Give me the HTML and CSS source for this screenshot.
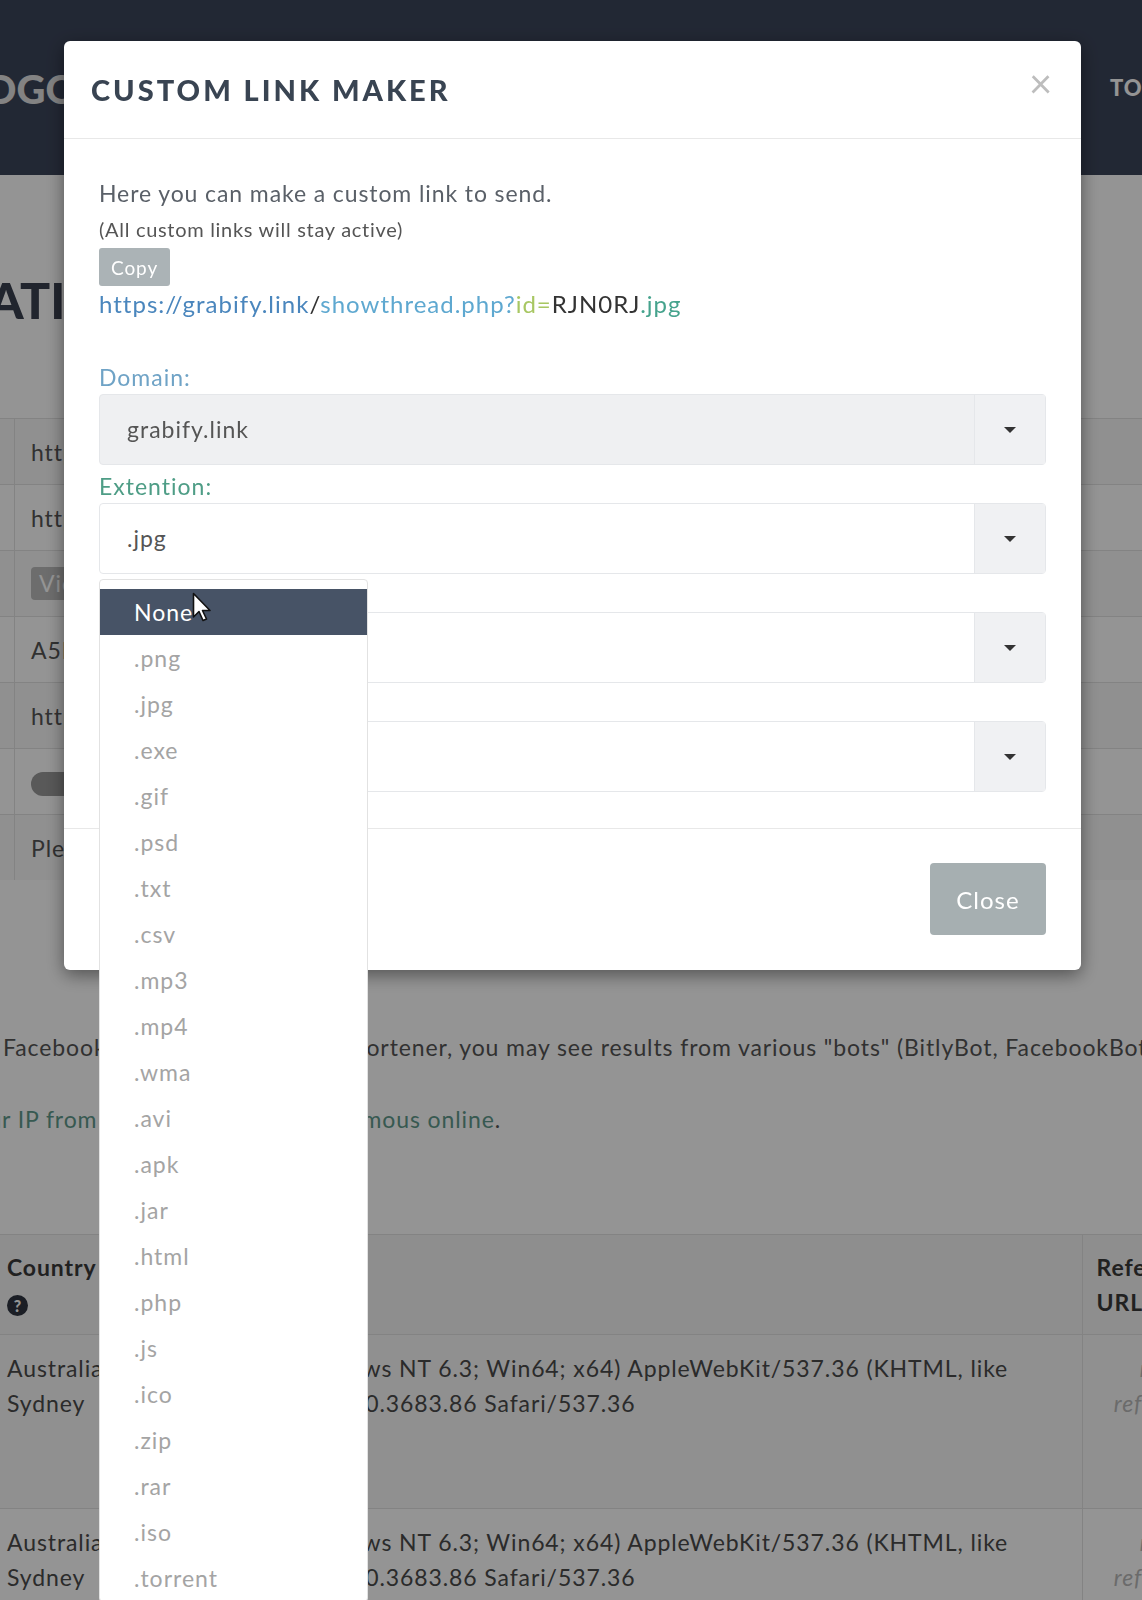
FILE: index.html
```html
<!DOCTYPE html>
<html lang="en">
<head>
    <meta charset="UTF-8">
    <meta name="viewport" content="width=device-width, initial-scale=1.0">
    <title>Custom Link Maker</title>
    <link rel="stylesheet" href="styles.css">
</head>
<body>
    <div class="page">
        <header class="topbar">
            <span class="logo">LOGO</span>
            <nav>
                <ul class="top-links">
                    <li><a href="#">HOME</a></li>
                    <li><a href="#">TOOLS</a></li>
                </ul>
            </nav>
        </header>

        <main class="content">
            <h1 class="page-title">INFORMATION</h1>

            <table class="info-table">
                <tr><td class="info-key"></td><td>https://grabify.link/RJN0RJ</td></tr>
                <tr><td class="info-key"></td><td>https://grabify.link/track/RJN0RJ</td></tr>
                <tr><td class="info-key"></td><td><span class="view-btn">View</span></td></tr>
                <tr><td class="info-key"></td><td>A5F2K9</td></tr>
                <tr><td class="info-key"></td><td>https://www.youtube.com/</td></tr>
                <tr><td class="info-key"></td><td><span class="toggle"></span></td></tr>
                <tr><td class="info-key"></td><td>Please note that smart logger is enabled.</td></tr>
            </table>

            <p class="note">Facebook, Twitter or via a URL shortener, you may see results from various "bots" (BitlyBot, FacebookBot, TwitterBot)</p>
            <p class="note note-link"><a href="#">your IP from users and remain anonymous online</a>.</p>

            <table class="log-table">
                <thead>
                    <tr>
                        <th class="col-country">Country<br><span class="help-icon">?</span></th>
                        <th class="col-agent">User Agent</th>
                        <th class="col-ref">Referrer URL</th>
                    </tr>
                </thead>
                <tbody>
                    <tr>
                        <td>Australia<br>Sydney</td>
                        <td class="agent">Mozilla/5.0 (Windows NT 6.3; Win64; x64) AppleWebKit/537.36 (KHTML, like<br>Gecko) Chrome/69.0.3683.86 Safari/537.36</td>
                        <td class="no-ref">no<br>referrer</td>
                    </tr>
                    <tr>
                        <td>Australia<br>Sydney</td>
                        <td class="agent">Mozilla/5.0 (Windows NT 6.3; Win64; x64) AppleWebKit/537.36 (KHTML, like<br>Gecko) Chrome/69.0.3683.86 Safari/537.36</td>
                        <td class="no-ref">no<br>referrer</td>
                    </tr>
                </tbody>
            </table>
        </main>
    </div>

    <div class="backdrop"></div>

    <div class="modal">
        <div class="modal-dialog">
            <div class="modal-header">
                <h2 class="modal-title">CUSTOM LINK MAKER</h2>
                <span class="close-x">&times;</span>
            </div>

            <div class="modal-body">
                <p class="lead">Here you can make a custom link to send.</p>
                <p class="small-note">(All custom links will stay active)</p>
                <button class="copy-btn">Copy</button>
                <p class="link-preview"><span class="u-host">https://grabify.link</span><span class="u-dark">/</span><span class="u-path">showthread.php?</span><span class="u-param">id=</span><span class="u-dark">RJN0RJ</span><span class="u-ext">.jpg</span></p>

                <div class="form-group first">
                    <label class="label-domain">Domain:</label>
                    <div class="select disabled">
                        <span class="select-value">grabify.link</span>
                        <span class="select-arrow"><i class="caret"></i></span>
                    </div>
                </div>

                <div class="form-group">
                    <label class="label-ext">Extention:</label>
                    <div class="select open">
                        <span class="select-value">.jpg</span>
                        <span class="select-arrow"><i class="caret"></i></span>

                        <ul class="select-menu">
                            <li class="active">None</li>
                            <li>.png</li>
                            <li>.jpg</li>
                            <li>.exe</li>
                            <li>.gif</li>
                            <li>.psd</li>
                            <li>.txt</li>
                            <li>.csv</li>
                            <li>.mp3</li>
                            <li>.mp4</li>
                            <li>.wma</li>
                            <li>.avi</li>
                            <li>.apk</li>
                            <li>.jar</li>
                            <li>.html</li>
                            <li>.php</li>
                            <li>.js</li>
                            <li>.ico</li>
                            <li>.zip</li>
                            <li>.rar</li>
                            <li>.iso</li>
                            <li>.torrent</li>
                        </ul>

                        <svg class="cursor" width="20" height="32" viewBox="0 0 20 32">
                            <path d="M1.5 1.5 L1.5 25 L7 19.5 L11 28.5 L14.5 27 L10.5 18.5 L18 18.5 Z" fill="#fff" stroke="#111" stroke-width="1.6" stroke-linejoin="round"/>
                        </svg>
                    </div>
                </div>

                <div class="form-group">
                    <label class="label-ext">Path:</label>
                    <div class="select">
                        <span class="select-value">showthread.php</span>
                        <span class="select-arrow"><i class="caret"></i></span>
                    </div>
                </div>

                <div class="form-group">
                    <label class="label-ext">Parameter:</label>
                    <div class="select">
                        <span class="select-value">id</span>
                        <span class="select-arrow"><i class="caret"></i></span>
                    </div>
                </div>
            </div>

            <div class="modal-footer">
                <button class="close-btn">Close</button>
            </div>
        </div>
    </div>
</body>
</html>
```

FILE: styles.css
```css
html, body {
    margin: 0;
    padding: 0;
    overflow: hidden;
}

body {
    font-family: Lato, "Open Sans", sans-serif;
    letter-spacing: 0.9px;
    background-color: #fff;
    color: #444;
}

.page {
    width: 1220px;
    height: 1600px;
    overflow: hidden;
}

/* top bar */

.topbar {
    height: 175px;
    background-color: #3c455a;
    display: flex;
    align-items: center;
    justify-content: space-between;
    padding-right: 33px;
}

.logo {
    margin-left: -36px;
    margin-top: 2px;
    font-size: 40px;
    font-weight: 900;
    letter-spacing: 0;
    color: #e2e2e2;
}

.top-links {
    list-style: none;
    margin: 0;
    padding: 0;
    display: flex;
    gap: 60px;
}

.top-links a {
    color: #fff;
    text-decoration: none;
    font-size: 22px;
    font-weight: 900;
    letter-spacing: 1px;
}

/* page content */

.page-title {
    margin: 94px 0 87px -214px;
    font-size: 50px;
    line-height: 62px;
    font-weight: 900;
    letter-spacing: 0;
    color: #3a4050;
}

.info-table {
    width: 100%;
    border-collapse: collapse;
    font-size: 23px;
    color: #555;
}

.info-table td {
    height: 65px;
    border-top: 1px solid #e2e2e2;
    padding: 0 0 0 16px;
    white-space: nowrap;
}

.info-table tr:nth-child(odd) {
    background-color: #f9f9f9;
}

.info-table td.info-key {
    width: 14px;
    padding: 0;
    border-right: 1px solid #e2e2e2;
}

.view-btn {
    display: inline-block;
    background-color: #bcbcbc;
    color: #fff;
    padding: 3px 8px;
    border-radius: 4px;
    line-height: 27px;
}

.toggle {
    display: inline-block;
    width: 70px;
    height: 24px;
    border-radius: 12px;
    background-color: #999;
    vertical-align: middle;
}

.note {
    margin: 151px 0 0 3px;
    font-size: 23px;
    line-height: 33px;
    white-space: nowrap;
    color: #555;
}

.note-link {
    margin-top: 39px;
    margin-left: -38px;
}

.note-link a {
    color: #5f9a8c;
    text-decoration: none;
}

.log-table {
    margin-top: 98px;
    width: 1217px;
    table-layout: fixed;
    border-collapse: collapse;
    font-size: 23px;
    line-height: 35px;
    color: #4a4a4a;
    text-align: left;
}

.log-table th,
.log-table td {
    box-sizing: border-box;
    border-top: 1px solid #e2e2e2;
    vertical-align: top;
}

.log-table th {
    padding: 15px 8px 14px 7px;
    background-color: #f4f4f4;
    font-weight: 700;
    color: #3a3a3a;
}

.log-table td {
    padding: 16px 8px 0 7px;
    height: 174px;
}

.log-table td.agent {
    padding-left: 8px;
    white-space: nowrap;
}

.log-table tbody tr:nth-child(odd) {
    background-color: #f8f8f8;
}

.col-country {
    width: 144px;
}

.col-agent {
    width: 938px;
}

.col-ref {
    width: 135px;
}

.log-table th.col-agent {
    color: transparent;
}

.log-table .col-ref,
.log-table td.no-ref {
    border-left: 1px solid #e2e2e2;
    padding-left: 14px;
}

.log-table td.no-ref {
    text-align: center;
    font-style: italic;
    color: #b9b9b9;
}

.help-icon {
    display: inline-block;
    width: 21px;
    height: 21px;
    border-radius: 50%;
    background-color: #2f3540;
    color: #fff;
    font-size: 16px;
    font-weight: 900;
    letter-spacing: 0;
    line-height: 21px;
    text-align: center;
    vertical-align: middle;
}

/* modal */

.backdrop {
    position: fixed;
    inset: 0;
    background-color: rgba(0, 0, 0, 0.42);
}

.modal {
    position: fixed;
    inset: 0;
}

.modal-dialog {
    width: 1017px;
    margin: 41px 0 0 64px;
    background-color: #fff;
    border-radius: 6px;
    box-shadow: 0 5px 18px rgba(0, 0, 0, 0.45);
}

.modal-header {
    display: flex;
    justify-content: space-between;
    align-items: flex-start;
    padding: 31px 28px 31px 27px;
    border-bottom: 1px solid #e8e8e8;
}

.modal-title {
    margin: 0;
    font-size: 29px;
    line-height: 35px;
    font-weight: 900;
    letter-spacing: 3px;
    color: #394452;
}

.close-x {
    margin-top: -7px;
    font-size: 40px;
    line-height: 36px;
    color: #bdbdbd;
}

.modal-body {
    padding: 38px 35px 36px;
}

.lead {
    margin: 0;
    font-size: 23px;
    line-height: 33px;
    color: #5a6068;
}

.small-note {
    margin: 2px 0 0;
    font-size: 20px;
    line-height: 34px;
    letter-spacing: 0.7px;
    color: #555;
}

.copy-btn {
    display: block;
    margin-top: 2px;
    height: 38px;
    padding: 0 12px;
    border: none;
    border-radius: 3px;
    background-color: #abb3b6;
    color: #fff;
    font-family: inherit;
    font-size: 19px;
    letter-spacing: 0.9px;
}

.link-preview {
    margin: 1px 0 0;
    font-size: 24px;
    line-height: 33px;
    letter-spacing: 1px;
}

.u-host { color: #4a86bd; }
.u-dark { color: #333; }
.u-path { color: #5ea8d0; }
.u-param { color: #a8c763; }
.u-ext { color: #46a38d; }

.form-group {
    margin-top: 6px;
}

.form-group.first {
    margin-top: 42px;
}

.form-group label {
    display: block;
    font-size: 23px;
    line-height: 30px;
    letter-spacing: 1px;
    margin-bottom: 2px;
}

.label-domain {
    color: #6fa3c6;
}

.label-ext {
    color: #4e9d86;
}

.select {
    position: relative;
    display: flex;
    height: 71px;
    box-sizing: border-box;
    border: 1px solid #e5e7ea;
    border-radius: 4px;
    background-color: #fff;
}

.select.disabled {
    background-color: #eff0f2;
}

.select-value {
    flex: 1;
    padding-left: 27px;
    font-size: 23px;
    line-height: 69px;
    letter-spacing: 1px;
    color: #555;
}

.select-arrow {
    width: 70px;
    display: flex;
    align-items: center;
    justify-content: center;
    border-left: 1px solid #e5e7ea;
    background-color: #f0f1f3;
}

.caret {
    width: 0;
    height: 0;
    border-left: 6px solid transparent;
    border-right: 6px solid transparent;
    border-top: 6px solid #333;
}

.select-menu {
    position: absolute;
    top: calc(100% + 6px);
    left: -1px;
    width: 269px;
    margin: 0;
    padding: 9px 0 0;
    list-style: none;
    background-color: #fff;
    border: 1px solid #e2e2e2;
    border-radius: 4px;
    box-sizing: border-box;
    z-index: 5;
}

.select-menu li {
    height: 46px;
    line-height: 46px;
    padding-left: 34px;
    font-size: 23px;
    letter-spacing: 1px;
    color: #a4a4a4;
}

.select-menu li.active {
    background-color: #475366;
    color: #fff;
}

.cursor {
    position: absolute;
    left: 92px;
    top: 88px;
    z-index: 6;
}

.modal-footer {
    display: flex;
    justify-content: flex-end;
    padding: 34px 35px 35px;
    border-top: 1px solid #e8e8e8;
}

.close-btn {
    width: 116px;
    height: 72px;
    border: none;
    border-radius: 4px;
    background-color: #a6afb1;
    color: #fff;
    font-family: inherit;
    font-size: 24px;
    letter-spacing: 1px;
}
```
